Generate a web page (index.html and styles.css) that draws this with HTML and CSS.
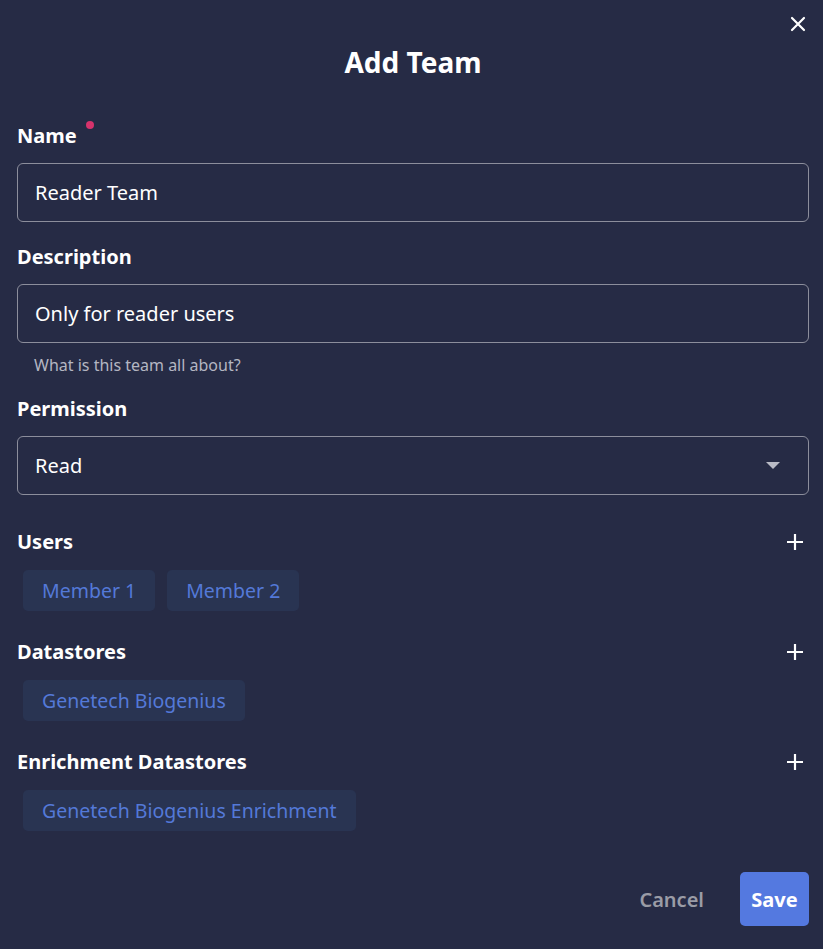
FILE: index.html
```html
<!DOCTYPE html>
<html lang="en">
<head>
<meta charset="utf-8">
<title>Add Team</title>
<link rel="stylesheet" href="styles.css">
</head>
<body>
<div class="dialog">
  <button class="close" aria-label="Close">
    <svg width="16" height="16" viewBox="0 0 16 16"><path d="M2 2 L14 14 M14 2 L2 14" stroke="#ffffff" stroke-width="2.2" stroke-linecap="round"/></svg>
  </button>
  <h1 class="title">Add Team</h1>

  <div class="field field-first">
    <label class="label">Name<span class="req"></span></label>
    <div class="input">Reader Team</div>
  </div>

  <div class="field">
    <label class="label">Description</label>
    <div class="input">Only for reader users</div>
    <div class="helper">What is this team all about?</div>
  </div>

  <div class="field field-perm">
    <label class="label">Permission</label>
    <div class="input select">
      <span>Read</span>
      <svg class="caret" width="14" height="8" viewBox="0 0 14 8"><path d="M0 0 H14 L7 7 Z" fill="#b9bbc6"/></svg>
    </div>
  </div>

  <div class="section section-users">
    <div class="section-head">
      <span class="label">Users</span>
      <svg class="plus" width="18" height="18" viewBox="0 0 18 18"><path d="M9 1 V17 M1 9 H17" stroke="#ffffff" stroke-width="2.2"/></svg>
    </div>
    <div class="chips">
      <span class="chip">Member 1</span>
      <span class="chip">Member 2</span>
    </div>
  </div>

  <div class="section">
    <div class="section-head">
      <span class="label">Datastores</span>
      <svg class="plus" width="18" height="18" viewBox="0 0 18 18"><path d="M9 1 V17 M1 9 H17" stroke="#ffffff" stroke-width="2.2"/></svg>
    </div>
    <div class="chips">
      <span class="chip">Genetech Biogenius</span>
    </div>
  </div>

  <div class="section">
    <div class="section-head">
      <span class="label">Enrichment Datastores</span>
      <svg class="plus" width="18" height="18" viewBox="0 0 18 18"><path d="M9 1 V17 M1 9 H17" stroke="#ffffff" stroke-width="2.2"/></svg>
    </div>
    <div class="chips">
      <span class="chip">Genetech Biogenius Enrichment</span>
    </div>
  </div>

  <div class="footer">
    <button class="btn-cancel">Cancel</button>
    <button class="btn-save">Save</button>
  </div>
</div>
</body>
</html>
```

FILE: styles.css
```css
html, body {
  margin: 0;
  padding: 0;
  background: #262b45;
}
body {
  font-family: "Noto Sans", "Open Sans", sans-serif;
  color: #ffffff;
}
.dialog {
  position: relative;
  width: 823px;
  height: 949px;
  box-sizing: border-box;
  padding: 0 14px 0 17px;
  background: #262b45;
}
.close {
  position: absolute;
  top: 16px;
  right: 17px;
  width: 16px;
  height: 16px;
  padding: 0;
  border: 0;
  background: transparent;
  display: flex;
}
.title {
  margin: 0;
  padding-top: 43px;
  height: 38px;
  line-height: 38px;
  font-size: 28px;
  font-weight: 700;
  text-align: center;
}
.field {
  display: flex;
  flex-direction: column;
  margin-top: 21px;
}
.field-first {
  margin-top: 41px;
}
.label {
  position: relative;
  font-size: 20px;
  font-weight: 700;
  line-height: 28px;
  height: 28px;
  display: inline-flex;
  align-self: flex-start;
}
.req {
  position: absolute;
  right: -17px;
  top: -1px;
  width: 8px;
  height: 8px;
  border-radius: 50%;
  background: #d6336c;
}
.input {
  margin-top: 13px;
  height: 59px;
  box-sizing: border-box;
  border: 1px solid #8c8e9c;
  border-radius: 6px;
  padding: 0 17px;
  display: flex;
  align-items: center;
  font-size: 20px;
  color: #ffffff;
}
.field .input + .helper {
  margin-top: 11px;
}
.helper {
  font-size: 16px;
  line-height: 22px;
  color: #b4b6c2;
  padding-left: 17px;
}
.field-perm {
  margin-top: 19px;
}
.select {
  justify-content: space-between;
  padding-right: 28px;
}
.caret {
  display: block;
}
.section {
  margin-top: 27px;
}
.section-users {
  margin-top: 33px;
}
.section-head {
  display: flex;
  justify-content: space-between;
  align-items: center;
  height: 28px;
}
.plus {
  margin-right: 5px;
}
.chips {
  display: flex;
  gap: 12px;
  margin-top: 14px;
  padding-left: 6px;
}
.chip {
  height: 41px;
  line-height: 41px;
  padding: 0 19px;
  border-radius: 5px;
  background: #293452;
  color: #5479d8;
  font-size: 19.5px;
}
.footer {
  display: flex;
  justify-content: flex-end;
  align-items: center;
  gap: 36px;
  margin-top: 41px;
}
.btn-cancel {
  border: 0;
  background: transparent;
  color: #9a9ca6;
  font-family: inherit;
  font-size: 20px;
  font-weight: 600;
  padding: 0;
}
.btn-save {
  border: 0;
  height: 54px;
  width: 69px;
  border-radius: 5px;
  background: #5479e0;
  color: #ffffff;
  font-family: inherit;
  font-size: 20px;
  font-weight: 700;
  padding: 0;
}
```
